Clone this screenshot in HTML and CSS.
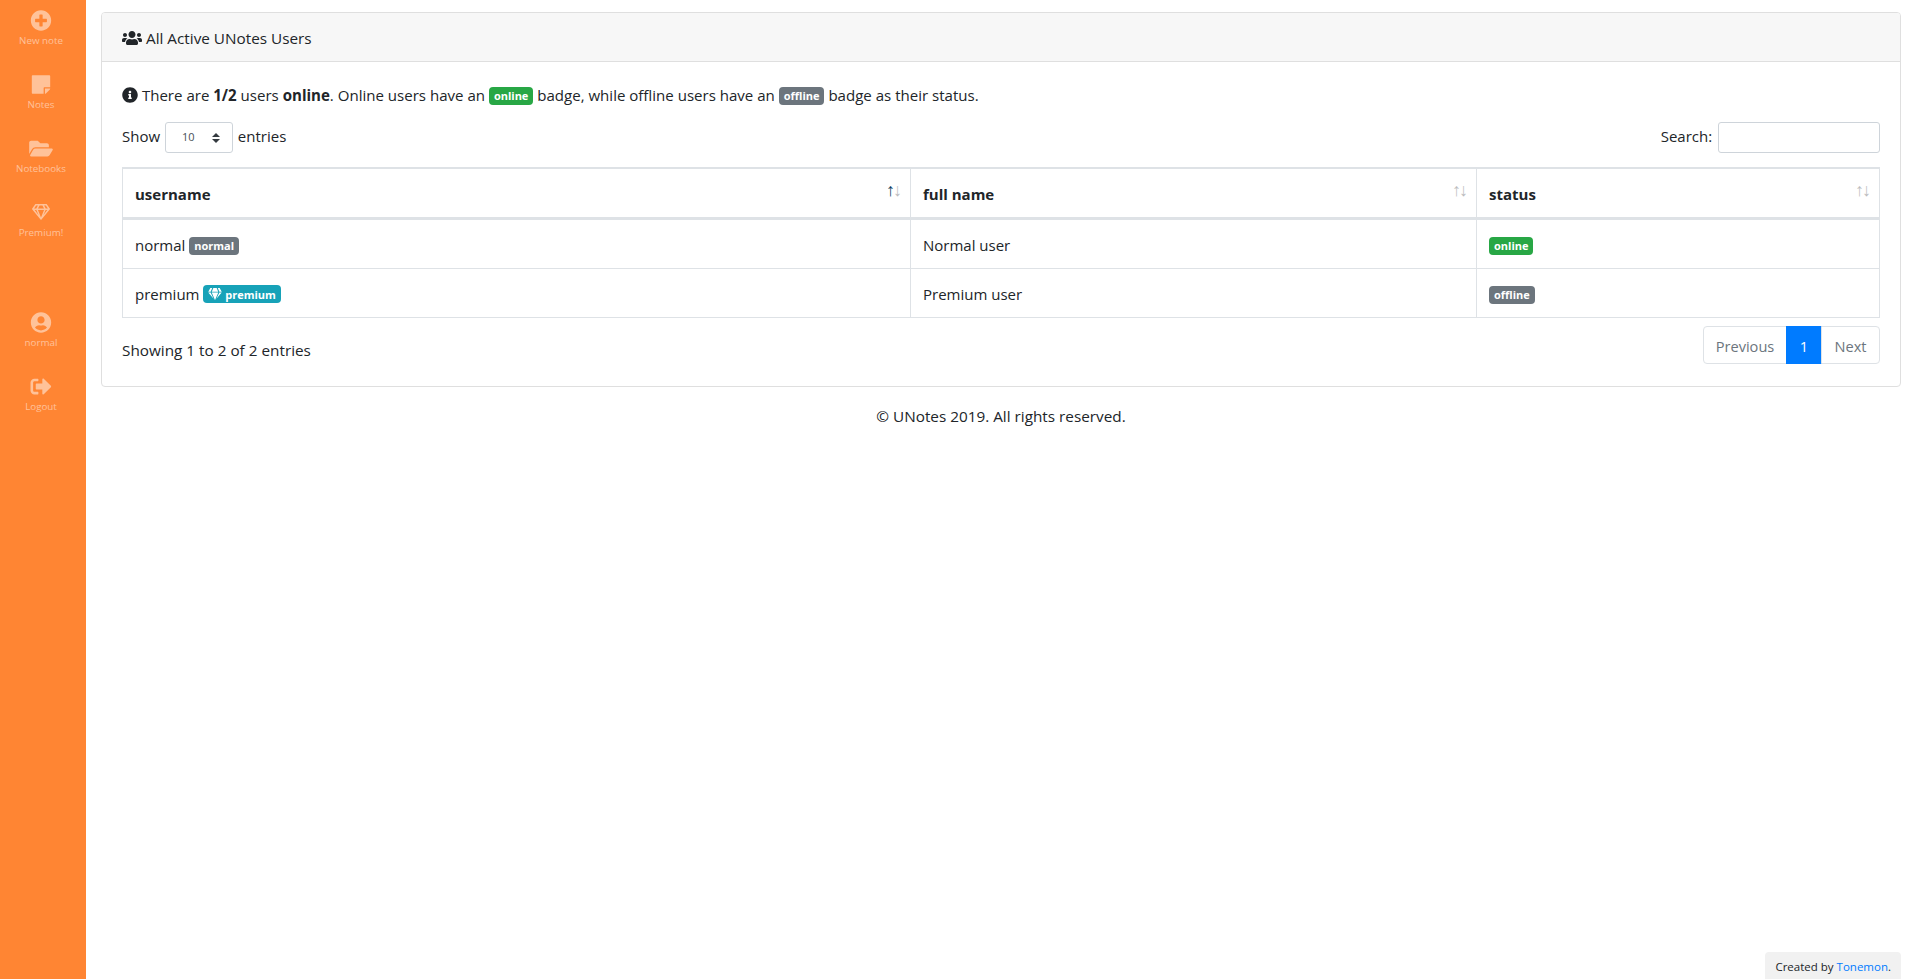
FILE: index.html
```html
<!DOCTYPE html>
<html lang="en">
<head>
<meta charset="utf-8">
<title>UNotes - Users</title>
<link rel="stylesheet" href="styles.css">
</head>
<body>
<svg class="defs" width="0" height="0" aria-hidden="true">
  <symbol id="i-plus" viewBox="0 0 512 512"><path d="M256 8C119 8 8 119 8 256s111 248 248 248 248-111 248-248S393 8 256 8zm144 276c0 6.6-5.4 12-12 12h-92v92c0 6.6-5.4 12-12 12h-56c-6.6 0-12-5.4-12-12v-92h-92c-6.6 0-12-5.4-12-12v-56c0-6.6 5.4-12 12-12h92v-92c0-6.6 5.4-12 12-12h56c6.6 0 12 5.4 12 12v92h92c6.6 0 12 5.4 12 12v56z"/></symbol>
  <symbol id="i-note" viewBox="0 0 448 512"><path d="M312 320h136V56c0-13.3-10.7-24-24-24H24C10.7 32 0 42.7 0 56v400c0 13.3 10.7 24 24 24h264V344c0-13.2 10.8-24 24-24zm129 55l-98 98c-4.5 4.5-10.6 7-17 7h-6V352h128v6.1c0 6.3-2.5 12.4-7 16.9z"/></symbol>
  <symbol id="i-folder" viewBox="0 0 576 512"><path d="M572.694 292.093L500.27 416.248A63.997 63.997 0 0 1 444.989 448H45.025c-18.523 0-30.064-20.093-20.731-36.093l72.424-124.155A64 64 0 0 1 152 256h399.964c18.523 0 30.064 20.093 20.73 36.093zM152 224h328v-48c0-26.51-21.49-48-48-48H272l-64-64H48C21.49 64 0 85.49 0 112v278.046l69.077-118.418C86.214 242.25 117.989 224 152 224z"/></symbol>
  <symbol id="i-gem-o" viewBox="0 0 576 512"><path d="M464 0H112c-4 0-7.8 2-10 5.4L2 152.6c-2.9 4.4-2.6 10.2.7 14.2l276 340.8c4.8 5.9 13.8 5.9 18.6 0l276-340.8c3.3-4 3.6-9.8.7-14.2L474.1 5.4C471.8 2 468.1 0 464 0zm-19.3 48l63.3 96h-68.4l-51.7-96h56.8zm-202.1 0h90.7l51.7 96H191l51.6-96zm-111.3 0h56.8l-51.7 96H68l63.3-96zm-43 144h51.4L208 352 88.3 192zm102.9 0h193.6L288 435.3 191.2 192zM368 352l68.2-160h51.4L368 352z"/></symbol>
  <symbol id="i-gem" viewBox="0 0 576 512"><path d="M485.5 0L576 160H474.9L405.7 0h79.8zm-128 0l69.2 160H149.3L218.5 0h139zm-267 0h79.8l-69.2 160H0L90.5 0zM0 192h100.7l123 251.7c1.5 3.1-2.7 5.9-5 3.3L0 192zm148.2 0h279.6l-137 318.2c-1 2.4-4.5 2.4-5.5 0L148.2 192zm204.1 251.7l123-251.7H576L357.3 446.9c-2.3 2.7-6.5-.1-5-3.2z"/></symbol>
  <symbol id="i-user" viewBox="0 0 496 512"><path d="M248 8C111 8 0 119 0 256s111 248 248 248 248-111 248-248S385 8 248 8zm0 96c48.6 0 88 39.4 88 88s-39.4 88-88 88-88-39.4-88-88 39.4-88 88-88zm0 344c-58.7 0-111.3-26.6-146.5-68.2 18.8-35.4 55.6-59.8 98.5-59.8 2.4 0 4.8.4 7.1 1.1 13 4.2 26.6 6.9 40.9 6.9 14.3 0 28-2.7 40.9-6.9 2.3-.7 4.7-1.1 7.1-1.1 42.9 0 79.7 24.4 98.5 59.8C359.3 421.4 306.7 448 248 448z"/></symbol>
  <symbol id="i-logout" viewBox="0 0 512 512"><path d="M497 273L329 441c-15 15-41 4.5-41-17v-96H152c-13.3 0-24-10.7-24-24v-96c0-13.3 10.7-24 24-24h136V88c0-21.4 25.9-32 41-17l168 168c9.3 9.4 9.3 24.6 0 34zM192 436v-40c0-6.6-5.4-12-12-12H96c-17.7 0-32-14.3-32-32V160c0-17.7 14.3-32 32-32h84c6.6 0 12-5.4 12-12V76c0-6.6-5.4-12-12-12H96c-53 0-96 43-96 96v192c0 53 43 96 96 96h84c6.6 0 12-5.4 12-12z"/></symbol>
  <symbol id="i-users" viewBox="0 0 640 512"><path d="M96 224c35.3 0 64-28.7 64-64s-28.7-64-64-64-64 28.7-64 64 28.7 64 64 64zm448 0c35.3 0 64-28.7 64-64s-28.7-64-64-64-64 28.7-64 64 28.7 64 64 64zm32 32h-64c-17.6 0-33.5 7.1-45.1 18.6 40.3 22.1 68.9 62 75.1 109.4h66c17.7 0 32-14.3 32-32v-32c0-35.3-28.7-64-64-64zm-256 0c61.9 0 112-50.1 112-112S381.9 32 320 32 208 82.1 208 144s50.1 112 112 112zm76.8 32h-8.3c-20.8 10-43.9 16-68.5 16s-47.6-6-68.5-16h-8.3C179.6 288 128 339.6 128 403.2V432c0 26.5 21.5 48 48 48h288c26.5 0 48-21.5 48-48v-28.8c0-63.6-51.6-115.2-115.2-115.2zm-223.7-13.4C161.5 263.1 145.6 256 128 256H64c-35.3 0-64 28.7-64 64v32c0 17.7 14.3 32 32 32h65.9c6.3-47.4 34.9-87.3 75.2-109.4z"/></symbol>
  <symbol id="i-info" viewBox="0 0 512 512"><path d="M256 8C119.043 8 8 119.083 8 256c0 136.997 111.043 248 248 248s248-111.003 248-248C504 119.083 392.957 8 256 8zm0 110c23.196 0 42 18.804 42 42s-18.804 42-42 42-42-18.804-42-42 18.804-42 42-42zm56 254c0 6.627-5.373 12-12 12h-88c-6.627 0-12-5.373-12-12v-24c0-6.627 5.373-12 12-12h12v-64h-12c-6.627 0-12-5.373-12-12v-24c0-6.627 5.373-12 12-12h64c6.627 0 12 5.373 12 12v100h12c6.627 0 12 5.373 12 12v24z"/></symbol>
</svg>

<div class="layout">
  <nav class="sidebar">
    <a class="side-item" href="#"><span class="side-icon"><svg class="ic-side"><use href="#i-plus"/></svg></span><span class="side-label">New note</span></a>
    <a class="side-item" href="#"><span class="side-icon"><svg class="ic-side"><use href="#i-note"/></svg></span><span class="side-label">Notes</span></a>
    <a class="side-item" href="#"><span class="side-icon"><svg class="ic-side"><use href="#i-folder"/></svg></span><span class="side-label">Notebooks</span></a>
    <a class="side-item" href="#"><span class="side-icon"><svg class="ic-side small"><use href="#i-gem-o"/></svg></span><span class="side-label">Premium!</span></a>
    <div class="side-gap"></div>
    <a class="side-item" href="#"><span class="side-icon"><svg class="ic-side"><use href="#i-user"/></svg></span><span class="side-label">normal</span></a>
    <a class="side-item" href="#"><span class="side-icon"><svg class="ic-side"><use href="#i-logout"/></svg></span><span class="side-label">Logout</span></a>
  </nav>

  <main class="content">
    <section class="card">
      <header class="card-header"><svg class="ic-users"><use href="#i-users"/></svg> All Active UNotes Users</header>
      <div class="card-body">
        <p class="intro"><svg class="ic-info"><use href="#i-info"/></svg> There are <b>1/2</b> users <b>online</b>. Online users have an <span class="badge green">online</span> badge, while offline users have an <span class="badge gray">offline</span> badge as their status.</p>

        <div class="controls">
          <label class="length">Show <select class="select"><option>10</option><option>25</option><option>50</option><option>100</option></select> entries</label>
          <label class="search">Search: <input class="search-input" type="search"></label>
        </div>

        <table class="table">
          <thead>
            <tr>
              <th class="col-a sort active">username</th>
              <th class="col-b sort">full name</th>
              <th class="col-c sort">status</th>
            </tr>
          </thead>
          <tbody>
            <tr>
              <td>normal <span class="badge gray">normal</span></td>
              <td>Normal user</td>
              <td><span class="badge green">online</span></td>
            </tr>
            <tr>
              <td>premium <span class="badge teal"><svg class="ic-gem"><use href="#i-gem"/></svg> premium</span></td>
              <td>Premium user</td>
              <td><span class="badge gray">offline</span></td>
            </tr>
          </tbody>
        </table>

        <div class="table-foot">
          <div class="info">Showing 1 to 2 of 2 entries</div>
          <ul class="pagination">
            <li class="page first">Previous</li>
            <li class="page current">1</li>
            <li class="page last">Next</li>
          </ul>
        </div>
      </div>
    </section>
    <footer class="copyright">© UNotes 2019. All rights reserved.</footer>
  </main>
</div>

<div class="credit">Created by <a href="#">Tonemon</a>.</div>
</body>
</html>
```
FILE: styles.css
```css
* { box-sizing: border-box; }
html, body { margin: 0; padding: 0; height: 100%; }
body {
  font-family: "Open Sans", "Liberation Sans", sans-serif;
  font-size: 15px;
  line-height: 24px;
  color: #212529;
  background: #fff;
}
.defs { position: absolute; }
.layout { display: flex; min-height: 979px; }

.sidebar {
  flex: 0 0 86px;
  height: 979px;
  background: #ff8533;
  padding: 8px 4px 0 0;
  display: flex;
  flex-direction: column;
}
.side-item {
  height: 64px;
  display: flex;
  flex-direction: column;
  align-items: center;
  color: rgba(255,255,255,.5);
  text-decoration: none;
}
.side-icon { height: 24px; display: flex; align-items: center; margin-bottom: 2px; }
.ic-side { width: 26px; height: 21px; fill: rgba(255,255,255,.5); }
.ic-side.small { height: 16px; }
.side-label { font-size: 9.8px; line-height: 14px; }
.side-gap { height: 46px; flex: none; }

.content { flex: 1; min-width: 0; padding: 12px 11px 0 15px; }

.card { border: 1px solid #dfdfdf; border-radius: 4px; background: #fff; }
.card-header {
  height: 49px;
  padding: 13px 20px 11px;
  font-size: 15.3px;
  background: #f7f7f7;
  border-bottom: 1px solid #dfdfdf;
  border-radius: 3px 3px 0 0;
}
.ic-users { width: 20px; height: 16px; fill: #212529; vertical-align: -2px; }
.card-body { padding: 20px 20px 22px; }

.intro { margin: 0 0 16px; height: 24px; padding-top: 1px; font-size: 15.05px; white-space: nowrap; }
.ic-info { width: 16px; height: 16px; fill: #212529; vertical-align: -2px; }

.badge {
  display: inline-block;
  height: 18px;
  padding: 3px 5px;
  font-size: 11px;
  font-weight: 700;
  line-height: 12px;
  color: #fff;
  border-radius: 4px;
  vertical-align: 1px;
  white-space: nowrap;
}
.green { background: #28a745; }
.gray { background: #6c757d; }
.teal { background: #17a2b8; }
.ic-gem { width: 14px; height: 12px; fill: #fff; vertical-align: -1px; }

.controls { display: flex; justify-content: space-between; align-items: center; height: 31px; margin-bottom: 14px; }
.length, .search { display: flex; align-items: flex-start; line-height: 29px; white-space: pre; }
.select {
  width: 68px;
  height: 31px;
  margin: 0 1px;
  padding: 0 0 0 16px;
  font: 11px/1.5 "Open Sans", sans-serif;
  color: #495057;
  border: 1px solid #ced4da;
  border-radius: 3px;
  appearance: none;
  background: #fff url("data:image/svg+xml,%3csvg xmlns='http://www.w3.org/2000/svg' viewBox='0 0 4 5'%3e%3cpath fill='%23343a40' d='M2 0L0 2h4zm0 5L0 3h4z'/%3e%3c/svg%3e") no-repeat right 12px center / 8px 10px;
}
.search-input {
  width: 162px;
  height: 31px;
  margin-left: 2px;
  padding: 4px 8px;
  border: 1px solid #ced4da;
  border-radius: 3px;
  background: #fff;
}

.table {
  width: 100%;
  table-layout: fixed;
  border-collapse: separate;
  border-spacing: 0;
  border-left: 1px solid #dee2e6;
}
.table th, .table td {
  padding: 13px 12px 11px;
  text-align: left;
  border-right: 1px solid #dee2e6;
  border-bottom: 1px solid #dee2e6;
}
.table th {
  position: relative;
  height: 53px;
  font-weight: 700;
  border-top: 2px solid #dee2e6;
  border-bottom-width: 3px;
}
.table td { height: 49px; }
.col-a { width: 788px; }
.col-b { width: 566px; }
.sort::before, .sort::after {
  position: absolute;
  top: 9px;
  font-family: "Liberation Sans", sans-serif;
  font-size: 18px;
  line-height: 24px;
  font-weight: 400;
  opacity: .3;
}
.sort::before { content: "\2191"; right: 15px; }
.sort::after { content: "\2193"; right: 8px; }
.sort.active::before { opacity: 1; color: #0d3b5c; }

.table-foot { display: flex; justify-content: space-between; align-items: flex-start; margin-top: 8px; }
.info { padding-top: 12px; font-size: 15.3px; }
.pagination { display: flex; margin: 0; padding: 0; list-style: none; }
.page {
  height: 38px;
  padding: 7px 0 5px;
  font-size: 14.6px;
  text-align: center;
  color: #6c757d;
  background: #fff;
  border: 1px solid #dee2e6;
  margin-left: -1px;
}
.page.first { width: 84px; border-radius: 4px 0 0 4px; }
.page.last { width: 59px; border-radius: 0 4px 4px 0; }
.page.current { width: 36px; color: #fff; background: #007bff; border-color: #007bff; }

.copyright { margin-top: 17px; text-align: center; font-size: 15.3px; }

.credit {
  position: fixed;
  right: 11px;
  bottom: 0;
  height: 27px;
  padding: 5px 10px 2px;
  font-size: 11.5px;
  line-height: 20px;
  background: #f1f1f1;
  border-radius: 4px 4px 0 0;
}
.credit a { color: #007bff; text-decoration: none; }
```
